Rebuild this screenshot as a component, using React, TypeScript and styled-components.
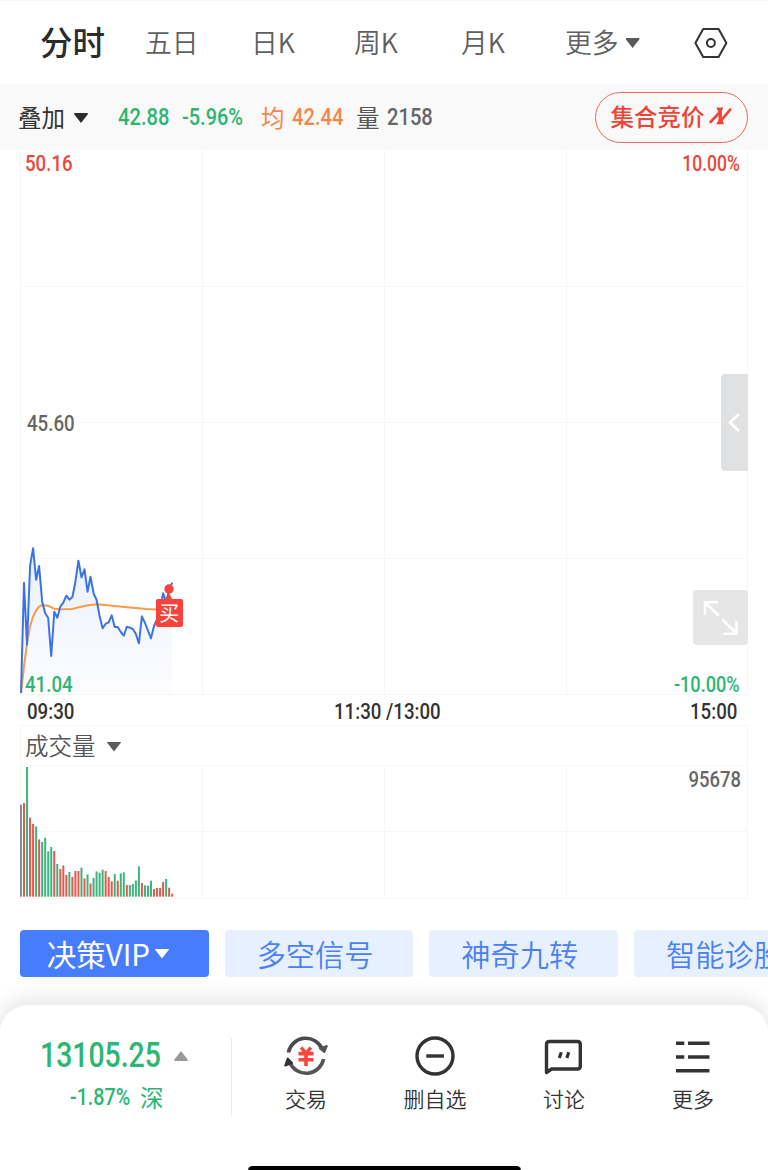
import React from "react";
import styled, { createGlobalStyle } from "styled-components";

const GlobalStyle = createGlobalStyle`
  * { box-sizing: border-box; }
  body {
    margin: 0;
    background: #fff;
    overflow: hidden;
    font-family: Inter, "Noto Sans CJK SC", sans-serif;
    color: #333;
  }
`;

const CJK = `"Noto Sans CJK SC", sans-serif`;
const RED = "#ec4638";
const GREEN = "#2bb673";
const ORANGE = "#f5854a";
const GRID = "#f6f6f7";

const Screen = styled.div`
  width: 768px;
  height: 1170px;
  display: flex;
  flex-direction: column;
  overflow: hidden;
  font-family: ${CJK};
  border-top: 1px solid #faf3f0;
`;

/* Narrow DIN-like numerals: Roboto squeezed horizontally inside a slot of known width. */
const Num = styled.span<{ $size?: number; $w?: number; $ml?: number; $color?: string; $scale?: number; $weight?: number; $right?: boolean }>`
  display: inline-block;
  flex: none;
  width: ${(p) => (p.$w ? `${p.$w}px` : "auto")};
  margin-left: ${(p) => p.$ml ?? 0}px;
  font-family: Roboto, sans-serif;
  font-weight: ${(p) => p.$weight ?? 500};
  font-size: ${(p) => p.$size ?? 22.5}px;
  line-height: 26px;
  white-space: pre;
  color: ${(p) => p.$color ?? "#333"};
  transform: scaleX(${(p) => p.$scale ?? 0.83});
  transform-origin: ${(p) => (p.$right ? "right" : "left")} center;
`;

const Periods = styled.nav`
  height: 83px;
  flex: none;
  display: flex;
  align-items: center;
  padding-left: 40px;
`;

const Period = styled.span<{ $w: number; $active?: boolean }>`
  width: ${(p) => p.$w}px;
  flex: none;
  display: flex;
  align-items: center;
  gap: 7px;
  padding-bottom: ${(p) => (p.$active ? 4 : 1)}px;
  font-size: ${(p) => (p.$active ? 32.5 : 26.8)}px;
  font-weight: ${(p) => (p.$active ? 500 : 350)};
  line-height: 40px;
  color: ${(p) => (p.$active ? "#2b2b2b" : "#606060")};
  white-space: nowrap;
`;

const Caret = styled.i<{ $color: string; $up?: boolean }>`
  width: 14px;
  height: 10px;
  flex: none;
  margin-top: 2px;
  background: ${(p) => p.$color};
  clip-path: ${(p) => (p.$up ? "polygon(50% 0, 100% 90%, 96% 100%, 4% 100%, 0 90%)" : "polygon(4% 0, 96% 0, 100% 10%, 50% 100%, 0 10%)")};
`;

const QuoteBar = styled.div`
  height: 66px;
  flex: none;
  display: flex;
  align-items: center;
  padding: 0 20px 0 18px;
  background: #f9f9f9;
`;

const QuoteLabel = styled.span<{ $w: number; $color?: string; $weight?: number }>`
  width: ${(p) => p.$w}px;
  flex: none;
  padding-bottom: 1px;
  font-size: 23.5px;
  line-height: 34px;
  font-weight: ${(p) => p.$weight ?? 400};
  color: ${(p) => p.$color ?? "#333"};
  white-space: nowrap;
`;

const AuctionButton = styled.button`
  width: 153.5px;
  height: 51px;
  margin-left: auto;
  padding: 0 0 2px 15px;
  display: flex;
  align-items: center;
  gap: 4px;
  border: 1.3px solid #ea6a60;
  border-radius: 26px;
  background: transparent;
  color: ${RED};
  font: 450 23.5px/34px ${CJK};
  white-space: nowrap;
`;

const ChartPanel = styled.section<{ $h: number }>`
  position: relative;
  height: ${(p) => p.$h}px;
  flex: none;
  svg { display: block; }
`;

const Pin = styled.div<{ $x?: number; $r?: number; $y: number }>`
  position: absolute;
  top: ${(p) => p.$y}px;
  ${(p) => (p.$x !== undefined ? `left: ${p.$x}px;` : `right: ${p.$r}px;`)}
  display: flex;
`;

const BuyMark = styled.div`
  width: 27.5px;
  height: 28px;
  border-radius: 2px;
  background: #f8423a;
  color: #fff;
  font-size: 20px;
  line-height: 27px;
  text-align: center;
`;

const DrawerHandle = styled.button`
  width: 27.5px;
  height: 97px;
  padding: 0;
  border: 0;
  border-radius: 4px 0 0 4px;
  background: #e0e1e3;
`;

const ExpandButton = styled.button`
  width: 55px;
  height: 55px;
  padding: 0;
  border: 0;
  border-radius: 4px;
  background: #e6e6e6;
`;

const TimeAxis = styled.div`
  height: 32px;
  flex: none;
  display: flex;
  align-items: center;
  padding: 4px 0 0 27px;
`;

const IndicatorBar = styled.div`
  height: 40px;
  flex: none;
  margin: 0 20px;
  padding-left: 4px;
  display: flex;
  align-items: center;
  border: 1px solid ${GRID};
  border-bottom: 0;
`;

const Chips = styled.div`
  height: 75px;
  flex: none;
  display: flex;
  gap: 16px;
  padding: 0 0 0 20px;
`;

const Chip = styled.button<{ $active?: boolean }>`
  width: 188.7px;
  height: 47px;
  flex: none;
  padding: 0 ${(p) => (p.$active ? 13 : 8)}px 2px 0;
  display: flex;
  align-items: center;
  justify-content: center;
  gap: 5px;
  border: 0;
  border-radius: 4px;
  background: ${(p) => (p.$active ? "#467dff" : "#e7f0fe")};
  color: ${(p) => (p.$active ? "#fff" : "#4b80f4")};
  font: ${(p) => (p.$active ? "400 29.5px" : "350 29.2px")}/44px ${CJK};
  white-space: nowrap;
`;

const Dock = styled.footer`
  flex: 1;
  position: relative;
  display: flex;
  align-items: flex-start;
  background: #fff;
  border-radius: 28px 28px 0 0;
  box-shadow: 0 -3px 26px rgba(0, 0, 0, 0.13);
`;

const IndexBlock = styled.div`
  width: 232px;
  height: 78px;
  margin-top: 33px;
  padding-left: 40px;
  border-right: 1.5px solid #ebebeb;
`;

const IndexLine = styled.div<{ $h: number; $pl?: number }>`
  height: ${(p) => p.$h}px;
  padding-left: ${(p) => p.$pl ?? 0}px;
  display: flex;
  align-items: center;
`;

const DockItem = styled.button`
  width: 129px;
  padding: 29px 0 0;
  display: flex;
  flex-direction: column;
  align-items: center;
  border: 0;
  background: none;
  color: #333;
  font: 350 21px/30px ${CJK};
  svg { display: block; margin-bottom: 5px; }
`;

const DockItems = styled.div`
  display: flex;
  padding-left: 9.5px;
`;

const HomeIndicator = styled.div`
  position: absolute;
  left: 248px;
  top: 161px;
  width: 273px;
  height: 9px;
  border-radius: 5px;
  background: #000;
`;

const STEP = 3.0233;
const X0 = 21;

const prices = [
  693, 582.7, 644.7, 565.3, 548.3, 579.7, 566, 601.7, 613.3, 618, 656, 611.7, 617.7, 606.7, 602.7, 595.7, 599.7,
  597, 581.7, 560.7, 577.3, 569.3, 591.7, 576.7, 593.3, 600, 616, 628.3, 623.7, 622.3, 615.3, 627, 627, 632, 635.7,
  626.7, 627.7, 629, 634, 643.3, 616.3, 623, 630.7, 638.3, 626, 619.3, 610, 593.3, 602, 590, 582.7,
];
const average = [
  [21, 693], [24, 666.7], [27, 643.3], [30, 626.7], [33, 616.7], [36, 610.7], [39, 606.7], [42, 605.2], [48, 605.7],
  [54, 608.7], [60, 609.3], [72, 609], [80, 607], [88, 605.3], [97, 604.3], [107, 605.3], [127, 607.3], [147, 609], [160, 609.7],
];

const volumes = [
  "n92", "r93.7", "g129.7", "r79", "r72.7", "g70.3", "r57.3", "g54.7", "g59", "g45.3", "g49.7", "r45.7", "g32.7",
  "r27.7", "r31.3", "r21.7", "g24.7", "r19.7", "r25.7", "r25.7", "g29", "r18.3", "g22.3", "r13.3", "g18.7", "g25.3",
  "g24", "g27", "r25.7", "r19.7", "r15.3", "g22.7", "r16", "g23.3", "g24.3", "r11.7", "g11.7", "g12.7", "g16.3",
  "g30.3", "r13.7", "g11.3", "g11", "g16", "r7.7", "r8.7", "r8.7", "r14.7", "g17.7", "r9", "r3",
];
const volumeColors: Record<string, string> = { n: "#8c8c8c", r: "#e05a50", g: "#3db57d" };

const columns = [20.5, 202.5, 384.5, 566.5, 747.5];

function PriceChart() {
  const points = prices.map((y, i) => `${(X0 + i * STEP).toFixed(1)},${(y - 150).toFixed(1)}`).join(" ");
  const avg = average.map(([x, y]) => `${x},${(y - 150).toFixed(1)}`).join(" ");
  return (
    <svg width="768" height="545" viewBox="0 0 768 545">
      <defs>
        <linearGradient id="fade" x1="0" y1="398" x2="0" y2="544" gradientUnits="userSpaceOnUse">
          <stop offset="0" stopColor="#e8effc" />
          <stop offset="1" stopColor="#fdfdff" />
        </linearGradient>
      </defs>
      <polygon points={`21,544 ${points} 172,544`} fill="url(#fade)" />
      <g stroke={GRID} strokeWidth="1">
        {columns.map((x) => <line key={x} x1={x} x2={x} y1="0" y2="544" />)}
        {[136.5, 272.5, 408.5, 544.5].map((y) => <line key={y} x1="20" x2="748" y1={y} y2={y} />)}
      </g>
      <polyline points={avg} fill="none" stroke="#f79a4a" strokeWidth="2" strokeLinejoin="round" />
      <polyline points={points} fill="none" stroke="#3c73e4" strokeWidth="2" strokeLinejoin="round" />
      <circle cx="169" cy="439" r="4.7" fill="#f8423a" />
      <path d="M169 443 L173 451 H165 Z" fill="#f8423a" />
    </svg>
  );
}

function VolumeChart() {
  return (
    <svg width="768" height="134" viewBox="0 0 768 134">
      <g stroke={GRID} strokeWidth="1">
        {columns.map((x) => <line key={x} x1={x} x2={x} y1="0" y2="133" />)}
        {[0.5, 66.5, 133.5].map((y) => <line key={y} x1="20" x2="748" y1={y} y2={y} />)}
      </g>
      {volumes.map((v, i) => {
        const h = Number(v.slice(1));
        return <rect key={i} x={X0 + i * STEP - 1} y={131.7 - h} width="2" height={h} fill={volumeColors[v[0]]} />;
      })}
    </svg>
  );
}

export default function App() {
  return (
    <Screen>
      <GlobalStyle />
      <Periods>
        <Period $w={105} $active>分时</Period>
        <Period $w={106}>五日</Period>
        <Period $w={103}>日K</Period>
        <Period $w={107}>周K</Period>
        <Period $w={104}>月K</Period>
        <Period $w={129}>更多<Caret $color="#5a5a5a" /></Period>
        <svg width="34" height="34" viewBox="0 0 34 34" fill="none" stroke="#333" strokeWidth="2" strokeLinejoin="round">
          <path d="M9.2 3 H24.6 L32.4 17 L24.6 31 H9.2 L1.4 17 Z" />
          <circle cx="16.9" cy="17" r="4" />
        </svg>
      </Periods>

      <QuoteBar>
        <QuoteLabel $w={56}>叠加</QuoteLabel>
        <Caret $color="#2b2b2b" />
        <Num $size={24} $w={64} $ml={30} $scale={0.84} $color={GREEN}>42.88</Num>
        <Num $size={24} $w={79} $color={GREEN}>-5.96%</Num>
        <QuoteLabel $w={31} $color={ORANGE}>均</QuoteLabel>
        <Num $size={24} $w={64} $scale={0.84} $color={ORANGE}>42.44</Num>
        <QuoteLabel $w={31} $color="#555">量</QuoteLabel>
        <Num $size={24} $w={50} $scale={0.84} $color="#666">2158</Num>
        <AuctionButton>
          集合竞价
          <svg width="23" height="18" viewBox="0 0 23 18" fill={RED} stroke={RED}>
            <path d="M1.6 15 L9.5 6.5" strokeWidth="2.6" strokeLinecap="round" />
            <path d="M7.3 0.5 H14.2 L13 3.5 L12.8 11.5 L15 17.3 H7.2 L9.6 13 L9.4 5 Z" stroke="none" />
            <path d="M12.6 12.8 L21.2 2.6" strokeWidth="2.6" strokeLinecap="round" />
          </svg>
        </AuctionButton>
      </QuoteBar>

      <ChartPanel $h={543}>
        <PriceChart />
        <Pin $x={25} $y={-0.5}><Num $color={RED}>50.16</Num></Pin>
        <Pin $r={28} $y={-0.5}><Num $color={RED} $scale={0.78} $right>10.00%</Num></Pin>
        <Pin $x={27} $y={260}><Num $color="#666">45.60</Num></Pin>
        <Pin $x={25} $y={521}><Num $color={GREEN}>41.04</Num></Pin>
        <Pin $r={28} $y={521}><Num $color={GREEN} $scale={0.805} $right>-10.00%</Num></Pin>
        <Pin $x={155.5} $y={449}><BuyMark>买</BuyMark></Pin>
        <Pin $r={20} $y={224}>
          <DrawerHandle>
            <svg width="28" height="97" viewBox="0 0 28 97" fill="none" stroke="#fff" strokeWidth="2.8">
              <path d="M18 40 L9 48.5 L18 57" />
            </svg>
          </DrawerHandle>
        </Pin>
        <Pin $r={20} $y={439.5}>
          <ExpandButton>
            <svg width="55" height="55" viewBox="0 0 55 55" fill="none" stroke="#fff" strokeWidth="2.5">
              <path d="M12 25 V12.3 H25 M12.5 12.8 L26 26 M29.5 29.5 L43.5 43.3 M43.5 31 V43.8 H30.5" />
            </svg>
          </ExpandButton>
        </Pin>
      </ChartPanel>

      <TimeAxis>
        <Num $w={307}>09:30</Num>
        <Num $w={356}>11:30 /13:00</Num>
        <Num $w={50}>15:00</Num>
      </TimeAxis>
      <IndicatorBar>
        <QuoteLabel $w={82} $color="#555" $weight={350}>成交量</QuoteLabel>
        <Caret $color="#5a5a5a" />
      </IndicatorBar>
      <ChartPanel $h={165}>
        <VolumeChart />
        <Pin $r={27} $y={1}><Num $color="#666" $scale={0.82} $right>95678</Num></Pin>
      </ChartPanel>

      <Chips>
        <Chip $active>决策VIP<Caret $color="#fff" /></Chip>
        <Chip>多空信号</Chip>
        <Chip>神奇九转</Chip>
        <Chip>智能诊股</Chip>
      </Chips>

      <Dock>
        <IndexBlock>
          <IndexLine $h={34}>
            <Num $size={35.5} $w={134} $scale={0.8} $color={GREEN}>13105.25</Num>
            <Caret $color="#999" $up />
          </IndexLine>
          <IndexLine $h={50} $pl={30}>
            <Num $size={24} $w={70} $color={GREEN} $scale={0.82}>-1.87%</Num>
            <QuoteLabel $w={24} $color={GREEN}>深</QuoteLabel>
          </IndexLine>
        </IndexBlock>
        <DockItems>
          <DockItem>
            <svg width="46" height="44" viewBox="0 0 46 44" fill="none" strokeWidth="3.6">
              <path d="M5.4 18.5 A17.8 17.8 0 0 1 39.2 15" stroke="#4a4a4a" />
              <path d="M40.6 25 A17.8 17.8 0 0 1 6.8 28.5" stroke="#555" />
              <path d="M37 14.5 L43.8 12 L41.3 18 Z" fill="#555" stroke="#555" strokeWidth="2" strokeLinejoin="round" />
              <path d="M9 29 L2.2 31.5 L4.7 24.5 Z" fill="#333" stroke="#333" strokeWidth="2" strokeLinejoin="round" />
              <path d="M18.2 13.5 L23 19.5 L27.8 13.5 M15.5 19.6 H30.5 M15.5 25.7 H30.5 M23 19.5 V32" stroke="#f8463c" strokeWidth="3.6" />
            </svg>
            交易
          </DockItem>
          <DockItem>
            <svg width="44" height="44" viewBox="0 0 44 44" fill="none" stroke="#333" strokeWidth="3.4">
              <circle cx="22" cy="22" r="18" />
              <path d="M13.3 22 H31" />
            </svg>
            删自选
          </DockItem>
          <DockItem>
            <svg width="44" height="44" viewBox="0 0 44 44" fill="none" stroke="#333" strokeWidth="3.4" strokeLinejoin="round">
              <path d="M4.5 38.5 V10.5 Q4.5 7.5 7.5 7.5 H35.3 Q38.3 7.5 38.3 10.5 V32 Q38.3 35 35.3 35 H9.5 Z" />
              <path d="M19.3 18.3 L17.3 24 M26.8 18.3 L24.8 24" strokeWidth="3.2" />
            </svg>
            讨论
          </DockItem>
          <DockItem>
            <svg width="44" height="44" viewBox="0 0 44 44" fill="none" stroke="#333" strokeWidth="3.6">
              <path d="M5 9.3 H13.3 M17 9.3 H38.5 M5 23 H13.3 M17 23 H38.5 M5 36.7 H38.5" />
            </svg>
            更多
          </DockItem>
        </DockItems>
        <HomeIndicator />
      </Dock>
    </Screen>
  );
}
